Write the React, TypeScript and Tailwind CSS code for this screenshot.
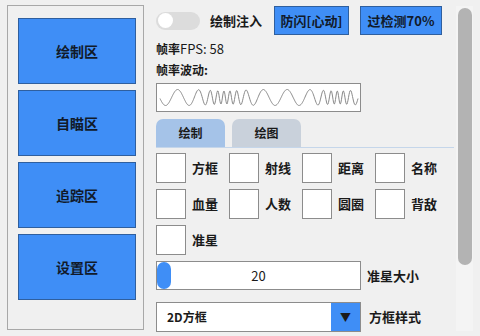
import React from 'react';

const FONT = { fontFamily: '"Noto Sans CJK SC", "Noto Sans", sans-serif' };

const NAV = ['绘制区', '自瞄区', '追踪区', '设置区'];

const CHECKS = [
  ['方框', '射线', '距离', '名称'],
  ['血量', '人数', '圆圈', '背敌'],
  ['准星'],
];

// slow, fast, slow, fast — rough look of the fps jitter
const wavePath = () => {
  const pts: string[] = [];
  let phase = 0;
  const w = 198;
  for (let x = 0; x <= w; x += 0.5) {
    const t = x / w;
    const fast = Math.max(
      Math.exp(-Math.pow((t - 0.33) / 0.1, 2)),
      Math.exp(-Math.pow((t - 0.9) / 0.09, 2))
    );
    const f = 0.26 + 0.8 * fast;
    phase += f * 0.5;
    const amp = 8 - 1.5 * fast;
    const y = 13.5 + Math.sin(phase) * amp;
    pts.push(`${x === 0 ? 'M' : 'L'}${(x + 3).toFixed(1)} ${y.toFixed(1)}`);
  }
  return pts.join(' ');
};

const Box = () => (
  <div className="w-[30px] h-[30px] bg-white border border-[#8c8c8c] shrink-0" />
);

export default function App() {
  return (
    <div className="w-[480px] h-[336px] bg-[#f0f0f0] flex overflow-hidden text-[#1a1a1a]" style={FONT}>
      {/* Left nav */}
      <div className="ml-[7px] mt-[5px] w-[137px] h-[325px] border border-[#a8a8a8] pt-[12px] pl-[10px] flex flex-col gap-[6px]">
        {NAV.map((n) => (
          <div
            key={n}
            className="w-[118px] h-[66px] bg-[#3f8ef6] border border-[#2f5f9e] flex items-center justify-center text-[14px] font-bold text-[#111a2a]"
          >
            {n}
          </div>
        ))}
      </div>

      {/* Right column */}
      <div className="ml-[12px] w-[298px] pt-[6px] flex flex-col">
        <div className="flex items-center h-[29px]">
          <div className="w-[44px] h-[18px] rounded-full bg-[#dcdcdc] flex items-center pl-[2px]">
            <div className="w-[15px] h-[15px] rounded-full bg-white" />
          </div>
          <span className="ml-[10px] text-[13px] font-bold">绘制注入</span>
          <div className="ml-[12px] w-[75px] h-[29px] bg-[#3f8ef6] border border-[#2f5f9e] flex items-center justify-center text-[13px] font-bold text-[#111a2a]">
            防闪[心动]
          </div>
          <div className="ml-[11px] w-[82px] h-[29px] bg-[#3f8ef6] border border-[#2f5f9e] flex items-center justify-center text-[13px] font-bold text-[#111a2a]">
            过检测70%
          </div>
        </div>

        <div className="mt-[6px] h-[16px] leading-[16px] text-[12px] font-bold">
          帧率<span className="font-normal text-[13px]">FPS: 58</span>
        </div>
        <div className="mt-[5px] h-[16px] leading-[16px] text-[12px] font-bold">帧率波动:</div>

        <div className="mt-[5px] w-[205px] h-[29px] bg-white border border-[#8c8c8c]">
          <svg width="203" height="27" viewBox="0 0 203 27">
            <path d={wavePath()} fill="none" stroke="#8a8a8a" strokeWidth="1" />
          </svg>
        </div>

        {/* tabs */}
        <div className="mt-[7px] flex items-end gap-[7px] border-b border-[#c5d6ea] h-[29px]">
          <div className="w-[69px] h-[28px] rounded-t-[7px] bg-[#a5c3e8] flex items-center justify-center text-[12px] font-bold">
            绘制
          </div>
          <div className="w-[69px] h-[28px] rounded-t-[7px] bg-[#c9d1db] flex items-center justify-center text-[12px] font-bold">
            绘图
          </div>
        </div>

        <div className="mt-[5px] flex flex-col gap-[6px]">
          {CHECKS.map((row, i) => (
            <div key={i} className="flex">
              {row.map((c) => (
                <div key={c} className="w-[73px] flex items-center">
                  <Box />
                  <span className="ml-[6px] text-[13px] font-bold">{c}</span>
                </div>
              ))}
            </div>
          ))}
        </div>

        {/* slider */}
        <div className="mt-[6px] flex items-center">
          <div className="relative w-[205px] h-[29px] bg-white border border-[#8c8c8c] flex items-center justify-center text-[13px]">
            <div className="absolute left-0 top-0 w-[14px] h-[27px] rounded-full bg-[#3f8ef6]" />
            20
          </div>
          <span className="ml-[6px] text-[13px] font-bold">准星大小</span>
        </div>

        {/* dropdown */}
        <div className="mt-[12px] flex items-center">
          <div className="w-[205px] h-[30px] bg-white border border-[#8c8c8c] flex items-center">
            <span className="ml-[10px] flex-1 text-[12px] font-bold">2D方框</span>
            <div className="w-[29px] h-[28px] bg-[#3f8ef6] flex items-center justify-center text-[11px]">▼</div>
          </div>
          <span className="ml-[8px] text-[13px] font-bold">方框样式</span>
        </div>
      </div>

      {/* scrollbar */}
      <div className="ml-[2px] mt-[6px] w-[17px] h-[325px] bg-[#f4f4f4] flex justify-center pt-[2px]">
        <div className="w-[14px] h-[257px] rounded-full bg-[#b3b3b3]" />
      </div>
    </div>
  );
}
